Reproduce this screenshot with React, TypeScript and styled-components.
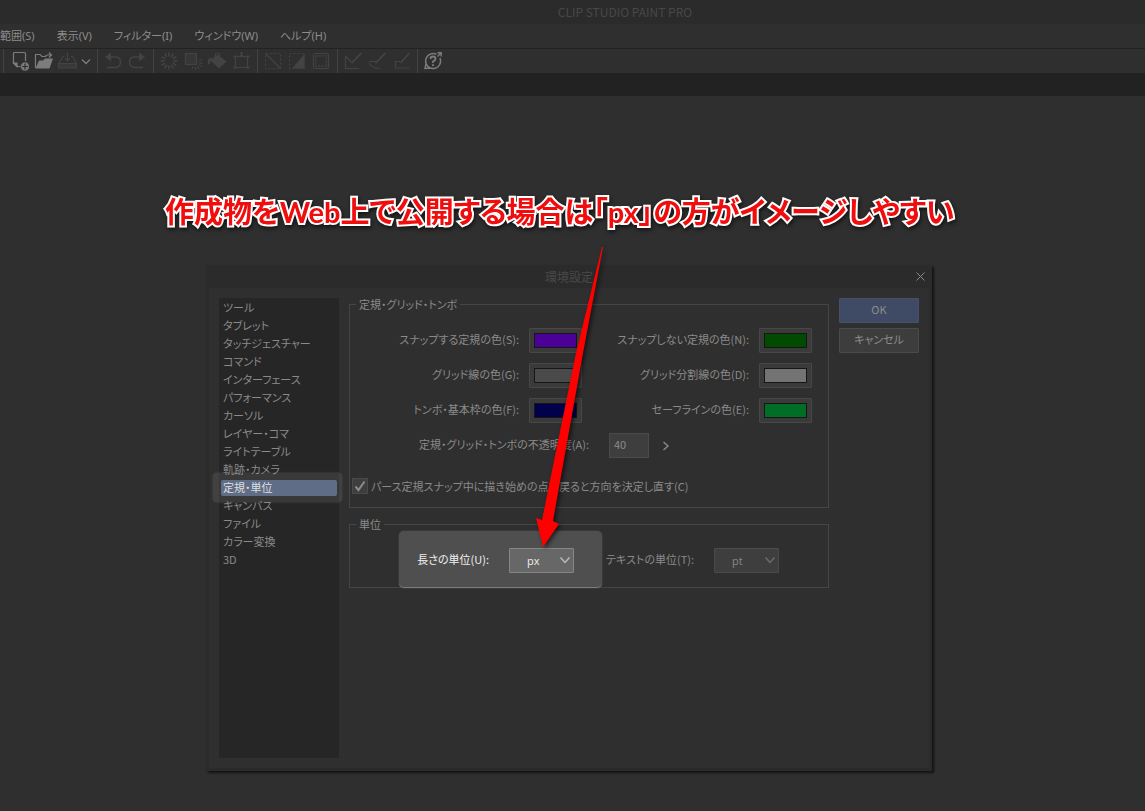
import React from "react";
import styled, { createGlobalStyle } from "styled-components";

const GlobalStyle = createGlobalStyle`
  * { box-sizing: border-box; }
  body {
    margin: 0;
    background: #2f2f2f;
    color: #8a8a8a;
    font-family: "Noto Sans CJK JP", sans-serif;
    font-size: 11px;
    line-height: 18px;
    font-feature-settings: "palt";
  }
  button, input, select { font: inherit; font-feature-settings: inherit; color: inherit; margin: 0; }
`;

const Window = styled.div`
  display: flex;
  flex-direction: column;
  min-height: 100vh;
  overflow: hidden;
`;

const TitleBar = styled.header`
  display: flex;
  align-items: center;
  justify-content: center;
  height: 24px;
  padding-left: 105px;
  background: #2b2b2b;
  color: #484848;
  font-size: 12px;
`;

const MenuBar = styled.nav`
  display: flex;
  align-items: center;
  gap: 22px;
  height: 24px;
`;

const MenuButton = styled.button`
  padding: 0;
  border: 0;
  background: none;
  color: #8c8c8c;
  font-family: "Noto Sans", "Noto Sans CJK JP", sans-serif;
  line-height: 24px;
`;

const Toolbar = styled.div`
  display: flex;
  height: 25px;
  padding-left: 3px;
  border-top: 1px solid #222;
`;

const ToolGroup = styled.div`
  display: flex;
  padding: 0 4px 0 3px;
  border-left: 1px solid #434343;
`;

const ToolButton = styled.button<{ $on?: boolean; $narrow?: boolean }>`
  display: flex;
  align-items: center;
  justify-content: center;
  width: ${(p) => (p.$narrow ? 14 : 24)}px;
  height: 24px;
  padding: 0;
  border: 0;
  background: none;
  color: ${(p) => (p.$on ? "#7c7c7c" : "#434343")};
`;

const TabStrip = styled.div`
  height: 23px;
  background: #222;
`;

const Workspace = styled.main`
  display: flex;
  flex: 1;
  justify-content: center;
  align-items: flex-start;
  padding: 169px 7px 40px 0;
`;

const Dialog = styled.section`
  position: relative;
  width: 726px;
  border: 3px solid #2b2b2b;
  border-top: 0;
  background: #2f2f2f;
  box-shadow: 2px 2px 2px #141414;
`;

const DialogTitle = styled.div`
  display: flex;
  align-items: center;
  justify-content: center;
  position: relative;
  height: 23px;
  background: #2b2b2b;
  color: #484848;
  font-size: 12px;
`;

const CloseButton = styled.button`
  position: absolute;
  right: 1px;
  top: 3px;
  display: flex;
  align-items: center;
  justify-content: center;
  width: 16px;
  height: 16px;
  padding: 0;
  border: 0;
  background: none;
  color: #8c8c8c;
`;

const DialogBody = styled.div`
  display: flex;
  gap: 10px;
  padding: 10px;
`;

const Categories = styled.ul`
  flex: 0 0 120px;
  min-height: 460px;
  margin: 0;
  padding: 1px 2px;
  list-style: none;
  background: #262626;
`;

const Category = styled.li<{ $selected?: boolean }>`
  position: relative;
  height: 18px;
  padding: 1px 0;
  color: ${(p) => (p.$selected ? "#dcdcdc" : "#8a8a8a")};
  ${(p) =>
    p.$selected &&
    `&::after {
      content: "";
      position: absolute;
      inset: -6px -5px -5px -8px;
      border-radius: 4px;
      background: rgba(255, 255, 255, 0.09);
      box-shadow: 0 0 2px #555;
      pointer-events: none;
    }`}
`;

const CategoryButton = styled.button<{ $selected?: boolean }>`
  display: block;
  width: 100%;
  height: 16px;
  padding: 0 2px 2px;
  border: 0;
  border-radius: 2px;
  background: ${(p) => (p.$selected ? "#515f7c" : "none")};
  line-height: 14px;
  text-align: left;
  white-space: nowrap;
`;

const Settings = styled.div`
  display: flex;
  flex: 1;
  flex-direction: column;
  gap: 10px;
`;

const Group = styled.fieldset`
  min-width: 0;
  margin: 0;
  padding: 0;
  border: 1px solid #454545;
`;

const Legend = styled.legend`
  margin-left: 6px;
  padding: 0 3px;
  line-height: 13px;
`;

const ColorGrid = styled.div`
  display: grid;
  grid-template-columns: 1fr 53px 1fr 53px;
  gap: 10px;
  padding: 17px 16px 10px 12px;
`;

const FieldLabel = styled.label`
  line-height: 23px;
  text-align: right;
  white-space: nowrap;
`;

const SwatchButton = styled.button`
  height: 25px;
  padding: 4px;
  border: 1px solid #474747;
  border-radius: 1px;
  background: #3a3a3a;
`;

const Swatch = styled.span<{ $color: string }>`
  display: block;
  height: 15px;
  border: 1px solid #161616;
  background: ${(p) => p.$color};
`;

const OpacityRow = styled.div`
  display: grid;
  grid-template-columns: 239px 40px 24px;
  column-gap: 20px;
`;

const NumberInput = styled.input`
  width: 40px;
  height: 25px;
  padding: 0 4px 4px;
  border: 1px solid #4a4a4a;
  background: #3e3e3e;
`;

const StepButton = styled.button`
  display: flex;
  align-items: center;
  width: 24px;
  height: 25px;
  margin-left: -7px;
  padding: 0;
  border: 0;
  background: none;
`;

const CheckRow = styled.label`
  display: flex;
  align-items: center;
  gap: 3px;
  height: 16px;
  margin: 20px 0 13px 2px;
  white-space: nowrap;
`;

const CheckBox = styled.span`
  display: grid;
  width: 16px;
  height: 16px;
  border: 1px solid #4a4a4a;
  background: #3e3e3e;
  & > * { grid-area: 1 / 1; }
`;

const CheckInput = styled.input`
  appearance: none;
  width: 14px;
  height: 14px;
`;

const UnitRow = styled.div`
  display: flex;
  padding-left: 49px;
`;

const UnitField = styled.div<{ $lit?: boolean }>`
  display: grid;
  grid-template-columns: ${(p) => (p.$lit ? "72px" : "92px")} 65px;
  column-gap: 20px;
  align-items: start;
  height: 57px;
  margin-bottom: -1px;
  padding: ${(p) => (p.$lit ? "17px 28px 0 18px" : "17px 0 0")};
  border-radius: 5px;
  ${(p) =>
    p.$lit &&
    `background: #4f4f4f;
     border-bottom: 1px solid #7c7c7c;
     box-shadow: 0 0 2px #555;
     color: #f0f0f0;`}
`;

const SelectWrap = styled.span<{ $lit?: boolean }>`
  position: relative;
  color: ${(p) => (p.$lit ? "#eee" : "#878787")};
  & > svg {
    position: absolute;
    right: 3px;
    top: 8px;
    color: ${(p) => (p.$lit ? "#bbb" : "#6c6c6c")};
    pointer-events: none;
  }
`;

const Select = styled.select<{ $lit?: boolean }>`
  appearance: none;
  display: block;
  width: 65px;
  height: 25px;
  padding: 0 17px;
  border: 1px solid ${(p) => (p.$lit ? "#868686" : "#4a4a4a")};
  border-radius: 1px;
  background: ${(p) => (p.$lit ? "#676767" : "#3e3e3e")};
  font-family: "Open Sans", sans-serif;
`;

const Actions = styled.div`
  display: flex;
  flex: 0 0 80px;
  flex-direction: column;
  gap: 5px;
`;

const ActionButton = styled.button<{ $primary?: boolean }>`
  height: 25px;
  padding: 0 0 2px;
  border: 1px solid ${(p) => (p.$primary ? "#46506a" : "#4a4a4a")};
  border-radius: 1px;
  background: ${(p) => (p.$primary ? "#3f4a65" : "#3d3d3d")};
  color: #8c8c8c;
  line-height: 21px;
`;

const Callout = styled.p`
  position: absolute;
  left: -44px;
  top: -77px;
  margin: 0;
  color: #f00d0d;
  font-family: Lato, "Noto Sans CJK JP", sans-serif;
  font-size: 29px;
  font-weight: 700;
  line-height: 48px;
  white-space: nowrap;
  -webkit-text-stroke: 4px #fff;
  paint-order: stroke fill;
  stroke-linejoin: round;
  filter: drop-shadow(1px 2px 2px #111);
`;

const Arrow = styled.svg`
  position: absolute;
  left: 317px;
  top: -20px;
  pointer-events: none;
  filter: drop-shadow(2px 2px 2px rgba(0, 0, 0, 0.6));
`;

const Icon = ({ children, size = 20 }: { children: React.ReactNode; size?: number }) => (
  <svg width={size} height={size} viewBox={`0 0 ${size} ${size}`} fill="none" stroke="currentColor" strokeWidth="1.2" aria-hidden="true">
    {children}
  </svg>
);

const Chevron = () => (
  <svg width="12" height="9" viewBox="0 0 12 9" fill="none" stroke="currentColor" strokeWidth="1.4" aria-hidden="true">
    <path d="M1.5 1.5 6 6.5 10.5 1.5" />
  </svg>
);

const rays = Array.from({ length: 12 }, (_, i) => i * 30);

type Tool = { name: string; on?: boolean; narrow?: boolean; icon: React.ReactNode };

const toolGroups: Tool[][] = [
  [
    { name: "新規", on: true, icon: <Icon><path d="M12 15.500H8L4.500 12V2.500Q4.500 1.500 5.500 1.500H15.500Q16.500 1.500 16.500 2.500V10" /><path d="M4.500 12H8V15.500Z" fill="currentColor" /><circle cx="16" cy="15.500" r="4.500" fill="currentColor" stroke="#2f2f2f" strokeWidth=".6" /><path d="M16 12.500v6M13 15.500h6" stroke="#2f2f2f" /></Icon> },
    { name: "開く", on: true, icon: <Icon><path d="M2.500 17V3.500h4.500l2 2h4M12.500 6Q12.500 4 15 4h3M16 1.500 18.500 4 16 6.500" /><path d="M2.500 17.500 6 9.500H10l2-2h8L16.500 17.500Z" fill="currentColor" stroke="none" /></Icon> },
    { name: "保存", icon: <Icon><path d="M7.500 5.500H6L1.500 12.500V17H19.500V12.500L15.500 5.500H14M1.500 12.500H19.500M10.500 1.500V10M8 7.500l2.500 2.500L13 7.500" /><path d="M2 13h17v4H2z" fill="currentColor" fillOpacity=".5" stroke="none" /></Icon> },
    { name: "メニュー", on: true, narrow: true, icon: <svg width="10" height="7" viewBox="0 0 10 7" fill="none" stroke="currentColor" strokeWidth="1.300"><path d="M1 1.500 5 5.500 9 1.500" /></svg> },
  ],
  [
    { name: "取り消し", icon: <Icon><path d="M5 6H13Q17.500 6.500 17.500 11T13 16.500H4" strokeWidth="1.500" /><path d="M8 1.500V10.500L2 6Z" fill="currentColor" stroke="none" /></Icon> },
    { name: "やり直し", icon: <Icon><path d="M15 6H7Q2.500 6.500 2.500 11T7 16.500H16" strokeWidth="1.500" /><path d="M12 1.500V10.500L18 6Z" fill="currentColor" stroke="none" /></Icon> },
  ],
  [
    { name: "消去", icon: <Icon>{rays.map((a) => <path key={a} d="M10 1.500V5.500" strokeWidth="1.600" transform={`rotate(${a} 10 10)`} />)}</Icon> },
    { name: "選択範囲外を消去", icon: <Icon><path d="M2.500 2.500H13.500V13.500H2.500Z" fill="currentColor" fillOpacity=".4" />{rays.slice(2, 8).map((a) => <path key={a} d="M12.500 5v3" transform={`rotate(${a} 12.500 12)`} />)}</Icon> },
    { name: "塗りつぶし", icon: <Icon><path d="M10.500 3.500 19.500 10.500 12 17.500 3.500 9.500Z" fill="currentColor" stroke="none" /><path d="M8.500 8V3.500Q8.500 2 10.500 2T12.500 3.500V6" /><path d="M5.500 6 .8 8.500V13Q3 14 3.500 10.500Z" fill="currentColor" stroke="none" /></Icon> },
    { name: "拡大・縮小", icon: <Icon><path d="M4.500 5.500H16.500V16.500H4.500ZM10.500 1.500v4" /><path d="M2.500 4.500h3v2h-3zM15.500 4.500h3v2h-3zM2.500 15.500h3v2h-3zM15.500 15.500h3v2h-3zM9 4h3v2h-3zM9.500 1h2v2h-2z" fill="currentColor" stroke="none" /></Icon> },
  ],
  [
    { name: "選択解除", icon: <Icon><path d="M2.500 2.500H17.500V17.500H2.500Z" strokeDasharray="2 2" /><path d="m2.500 2.500 15 15" /></Icon> },
    { name: "選択反転", icon: <Icon><path d="M2.500 2.500H17.500V17.500H2.500Z" strokeDasharray="2 2" /><path d="M17.500 3V17.500H5Z" fill="currentColor" stroke="none" /></Icon> },
    { name: "境界線", icon: <Icon><rect x="2.500" y="2.500" width="15" height="15" rx="2" /><rect x="4.800" y="4.800" width="10.400" height="10.400" strokeDasharray="2 1" /></Icon> },
  ],
  [
    { name: "定規にスナップ", icon: <Icon><path d="M2.500 5V17.500H16M2.500 5 8 11" /><path d="M8.500 12 18.500 2" strokeWidth="1.800" /></Icon> },
    { name: "特殊定規にスナップ", icon: <Icon><path d="M2 10.500H9M2 12Q5 17.500 13 17.500" /><path d="M8.500 12 18.500 2" strokeWidth="1.800" /></Icon> },
    { name: "グリッドにスナップ", icon: <Icon><path d="M9 10.500H4.500V17H18" /><path d="M9.500 12 18.500 2" strokeWidth="1.800" /></Icon> },
  ],
  [
    { name: "サポート", on: true, icon: <Icon><path d="M13.500 3.300A7.500 7.500 0 1 0 17 7M3 12.500 2 17.500 7 17M14.500 5.500 18 2M14.500 1.800H18.200V5.500" strokeWidth="1.400" /><path d="M7.500 8Q7.500 5.500 10 5.500T12.500 8Q12.500 9.500 10 10.500V12M10 13.300V15" strokeWidth="1.800" /></Icon> },
  ],
];

const menus = ["範囲(S)", "表示(V)", "フィルター(I)", "ウィンドウ(W)", "ヘルプ(H)"];

const categories = [
  "ツール", "タブレット", "タッチジェスチャー", "コマンド", "インターフェース", "パフォーマンス", "カーソル",
  "レイヤー・コマ", "ライトテーブル", "軌跡・カメラ", "定規・単位", "キャンバス", "ファイル", "カラー変換", "3D",
];

const colors = [
  { id: "snap", label: "スナップする定規の色(S):", color: "#4b0096" },
  { id: "nosnap", label: "スナップしない定規の色(N):", color: "#004b00" },
  { id: "grid", label: "グリッド線の色(G):", color: "#4a4a4a" },
  { id: "division", label: "グリッド分割線の色(D):", color: "#737373" },
  { id: "crop", label: "トンボ・基本枠の色(F):", color: "#00004b" },
  { id: "safe", label: "セーフラインの色(E):", color: "#006e25" },
];

export default function App() {
  return (
    <Window>
      <GlobalStyle />
      <TitleBar>CLIP STUDIO PAINT PRO</TitleBar>
      <MenuBar>
        {menus.map((m) => <MenuButton key={m}>{m}</MenuButton>)}
      </MenuBar>
      <Toolbar>
        {toolGroups.map((group, i) => (
          <ToolGroup key={i}>
            {group.map((t) => (
              <ToolButton key={t.name} aria-label={t.name} $on={t.on} $narrow={t.narrow}>{t.icon}</ToolButton>
            ))}
          </ToolGroup>
        ))}
      </Toolbar>
      <TabStrip />
      <Workspace>
        <Dialog>
          <DialogTitle>
            環境設定
            <CloseButton aria-label="閉じる">
              <svg width="9" height="9" viewBox="0 0 9 9" stroke="currentColor"><path d="M0.500 0.500 8.500 8.500M8.500 0.500 0.500 8.500" /></svg>
            </CloseButton>
          </DialogTitle>
          <DialogBody>
            <Categories>
              {categories.map((c) => (
                <Category key={c} $selected={c === "定規・単位"}>
                  <CategoryButton $selected={c === "定規・単位"}>{c}</CategoryButton>
                </Category>
              ))}
            </Categories>
            <Settings>
              <Group>
                <Legend>定規・グリッド・トンボ</Legend>
                <ColorGrid>
                  {colors.map((c) => (
                    <React.Fragment key={c.id}>
                      <FieldLabel htmlFor={c.id}>{c.label}</FieldLabel>
                      <SwatchButton id={c.id}><Swatch $color={c.color} /></SwatchButton>
                    </React.Fragment>
                  ))}
                </ColorGrid>
                <OpacityRow>
                  <FieldLabel htmlFor="opacity">定規・グリッド・トンボの不透明度(A):</FieldLabel>
                  <NumberInput id="opacity" defaultValue="40" />
                  <StepButton aria-label="不透明度を調整">
                    <svg width="8" height="10" viewBox="0 0 8 10" fill="none" stroke="currentColor" strokeWidth="1.400"><path d="M1.500 1 6 5 1.500 9" /></svg>
                  </StepButton>
                </OpacityRow>
                <CheckRow>
                  <CheckBox>
                    <CheckInput type="checkbox" defaultChecked />
                    <svg width="14" height="14" viewBox="0 0 14 14" fill="none" stroke="#8c8c8c" strokeWidth="2"><path d="M2.500 7.500 5.500 11 11.500 2.500" /></svg>
                  </CheckBox>
                  パース定規スナップ中に描き始めの点に戻ると方向を決定し直す(C)
                </CheckRow>
              </Group>
              <Group>
                <Legend>単位</Legend>
                <UnitRow>
                  <UnitField $lit>
                    <FieldLabel htmlFor="length">長さの単位(U):</FieldLabel>
                    <SelectWrap $lit>
                      <Select id="length" $lit defaultValue="px"><option>px</option><option>mm</option></Select>
                      <Chevron />
                    </SelectWrap>
                  </UnitField>
                  <UnitField>
                    <FieldLabel htmlFor="text">テキストの単位(T):</FieldLabel>
                    <SelectWrap>
                      <Select id="text" defaultValue="pt"><option>pt</option><option>Q</option></Select>
                      <Chevron />
                    </SelectWrap>
                  </UnitField>
                </UnitRow>
              </Group>
            </Settings>
            <Actions>
              <ActionButton $primary>OK</ActionButton>
              <ActionButton>キャンセル</ActionButton>
            </Actions>
          </DialogBody>
          <Callout>作成物をWeb上で公開する場合は「px」の方がイメージしやすい</Callout>
          <Arrow width="90" height="310" viewBox="0 0 90 310" aria-hidden="true">
            <path d="M76 2 77 2 57 108 27 276 33 279 17 302 10 273 16 275 50 108Z" fill="#f00" />
          </Arrow>
        </Dialog>
      </Workspace>
    </Window>
  );
}
